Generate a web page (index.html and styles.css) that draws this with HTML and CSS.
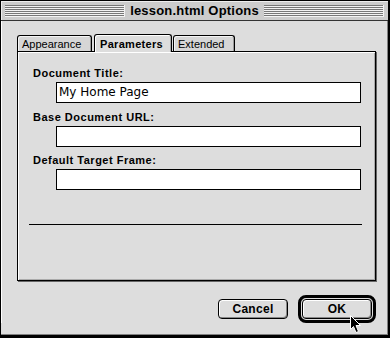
FILE: index.html
```html
<!DOCTYPE html>
<html lang="en">
<head>
  <meta charset="UTF-8" />
  <title>lesson.html Options</title>
  <link rel="stylesheet" href="styles.css">
</head>
<body>
  <div class="window">
    <div class="titlebar">
      <div class="stripes"></div>
      <span class="title">lesson.html Options</span>
      <div class="stripes"></div>
    </div>

    <div class="content">
      <div class="tabs">
        <div class="tab tab-appearance">Appearance</div>
        <div class="tab tab-active">Parameters</div>
        <div class="tab tab-extended">Extended</div>
      </div>

      <div class="panel">
        <div class="field-group">
          <label class="field-label">Document Title:</label>
          <div class="field">My Home Page</div>
        </div>
        <div class="field-group">
          <label class="field-label">Base Document URL:</label>
          <div class="field"></div>
        </div>
        <div class="field-group">
          <label class="field-label">Default Target Frame:</label>
          <div class="field"></div>
        </div>
        <div class="separator"></div>
      </div>

      <div class="buttons">
        <div class="button">Cancel</div>
        <div class="default-ring">
          <div class="button">OK</div>
        </div>
      </div>
    </div>

    <svg class="cursor" width="13" height="20" viewBox="0 0 13 20">
      <path d="M1.5 1.5 L1.5 15.5 L4.5 12.5 L7 18.5 L9.5 17.5 L7 11.5 L11.5 11.5 Z" fill="#000" stroke="#fff" stroke-width="1" />
    </svg>
  </div>
</body>
</html>
```

FILE: styles.css
```css
:root {
  --platinum: #dddddd;
  --title-gray: #cccccc;
  --shadow: #808080;
  --ui-font: 'Liberation Sans', Arial, sans-serif;
  --field-font: 'DejaVu Sans', 'Liberation Sans', sans-serif;
}

* {
  box-sizing: border-box;
  margin: 0;
  padding: 0;
}

html, body {
  width: 390px;
  height: 338px;
  overflow: hidden;
  background: #000;
  font-family: var(--ui-font);
  color: #000;
}

.window {
  position: relative;
  width: 390px;
  height: 338px;
  background: var(--platinum);
  border-style: solid;
  border-color: #000;
  border-width: 1px 2px 3px 1px;
  box-shadow: inset -1px -1px 0 var(--shadow);
}

/* Title bar */
.titlebar {
  display: flex;
  align-items: center;
  height: 20px;
  padding: 0 4px;
  background: var(--title-gray);
  border-bottom: 1px solid #333;
  box-shadow: inset 1px 1px 0 #eee;
}

.stripes {
  flex: 1;
  height: 12px;
  background: repeating-linear-gradient(to bottom, #777 0 1px, #f2f2f2 1px 2px);
  border-right: 1px solid #f2f2f2;
}

.title {
  padding: 0 5px;
  font-size: 13px;
  font-weight: bold;
  letter-spacing: 0.2px;
  line-height: 16px;
}

/* Tabs + panel */
.content {
  padding: 14px 12px 0 16px;
  box-shadow: inset 1px 0 0 #fff;
}

.tabs {
  display: flex;
  align-items: flex-end;
  height: 16px;
  font-size: 11px;
}

.tab {
  height: 16px;
  padding: 1px 0 0 4px;
  line-height: 14px;
  background: #d6d6d6;
  border: 1px solid #000;
  border-bottom: none;
  border-radius: 3px 3px 0 0;
  box-shadow: inset 1px 1px 0 #f4f4f4, inset -1px 0 0 #999;
}

.tab-appearance {
  width: 75px;
  margin-right: 2px;
}

.tab-active {
  position: relative;
  z-index: 1;
  width: 78px;
  height: 18px;
  margin-bottom: -1px;
  padding: 2px 0 0 5px;
  font-weight: bold;
  letter-spacing: 0.3px;
  background: var(--platinum);
  box-shadow: inset 1px 1px 0 #fff, inset -1px 0 0 #aaa;
}

.tab-extended {
  width: 62px;
  margin-left: 1px;
}

.panel {
  height: 230px;
  padding-top: 15px;
  border: 1px solid #000;
  box-shadow: inset 1px 1px 0 #fff, inset -1px -1px 0 #aaa, 1px 1px 0 #666;
}

.field-group {
  height: 44px;
}

.field-group:nth-child(2) {
  height: 43px;
}

.field-label {
  display: block;
  margin-left: 15px;
  font-size: 11px;
  font-weight: bold;
  letter-spacing: 0.5px;
  line-height: 13px;
}

.field {
  width: 305px;
  height: 21px;
  margin: 2px 0 0 38px;
  padding: 0 2px;
  background: #fff;
  border: 1px solid #000;
  font-family: var(--field-font);
  font-size: 12px;
  line-height: 19px;
}

.separator {
  width: 333px;
  height: 1px;
  margin: 26px 0 0 11px;
  background: #000;
}

/* Buttons */
.buttons {
  display: flex;
  justify-content: flex-end;
  align-items: center;
  gap: 10px;
  margin-top: 14px;
}

.button {
  width: 70px;
  height: 20px;
  font-size: 12px;
  font-weight: bold;
  letter-spacing: 0.3px;
  line-height: 18px;
  text-align: center;
  background: var(--platinum);
  border: 1px solid #000;
  border-radius: 4px;
  box-shadow: inset 1px 1px 0 #fff, inset -1px -1px 0 #888;
}

.default-ring {
  padding: 1px;
  border: 3px solid #000;
  border-radius: 8px;
}

.cursor {
  position: absolute;
  left: 348px;
  top: 313px;
}
```
